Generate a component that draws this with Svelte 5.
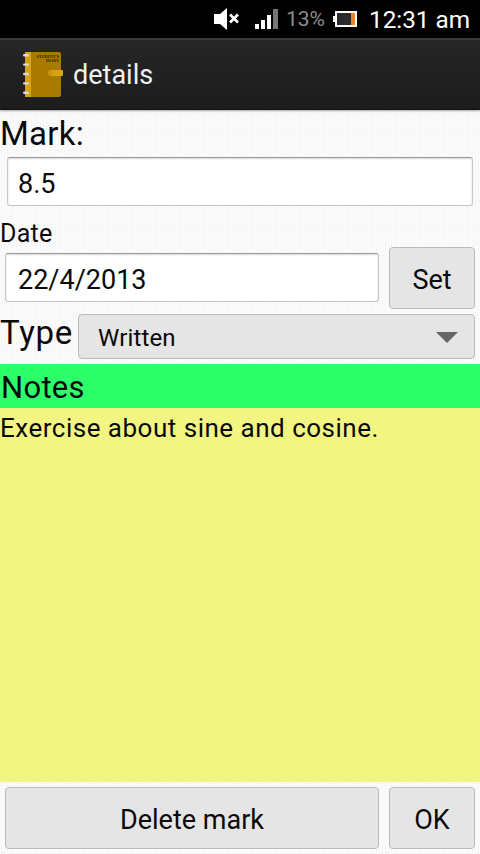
<script>
  const rings = [0, 1, 2, 3, 4];
</script>

<div class="screen">
  <header class="status">
    <svg class="mute" width="30" height="22" viewBox="0 0 30 22">
      <path d="M0 6h6l7-6v22l-7-6H0z" fill="#fff" />
      <path d="M16 6.5l8 8M24 6.5l-8 8" stroke="#fff" stroke-width="2.6" fill="none" />
    </svg>
    <svg class="signal" width="24" height="20" viewBox="0 0 24 20">
      <rect x="0" y="15" width="4" height="5" fill="#fff" />
      <rect x="6" y="11" width="4" height="9" fill="#fff" />
      <rect x="12" y="6" width="4" height="14" fill="#fff" />
      <rect x="18" y="0" width="5" height="20" fill="#777" />
    </svg>
    <span class="pct">13%</span>
    <svg class="battery" width="24" height="16" viewBox="0 0 24 16">
      <rect x="0" y="5" width="2" height="6" fill="#fff" />
      <rect x="2" y="0" width="22" height="16" fill="#fff" />
      <rect x="4" y="2" width="18" height="12" fill="#2a2a2a" />
      <rect x="18" y="2" width="4" height="12" fill="#f58220" />
    </svg>
    <span class="clock">12:31 am</span>
  </header>

  <div class="actionbar">
    <svg class="logo" width="42" height="48" viewBox="0 0 42 48">
      <rect x="3" y="1" width="36" height="45" rx="2" fill="#a87a00" />
      <rect x="3" y="1" width="6" height="45" fill="#d8a215" />
      <rect x="28" y="19" width="13" height="6" rx="1" fill="#d8a215" />
      <circle cx="28" cy="22" r="2.5" fill="#c8960f" />
      {#each rings as r}
        <rect x="1" y={3 + r * 9.4} width="6" height="2.4" rx="1.2" fill="#d8d8d8" />
      {/each}
      <text class="logo-text" x="37" y="6.5" text-anchor="end">STUDENT'S</text>
      <text class="logo-text" x="37" y="11" text-anchor="end">DIARY</text>
    </svg>
    <span class="title">details</span>
  </div>

  <main class="content">
    <label class="big mark" for="mark">Mark:</label>
    <div class="field mark-field" id="mark">8.5</div>

    <div class="small">Date</div>
    <div class="date-row">
      <div class="field date-field">22/4/2013</div>
      <button class="btn set">Set</button>
    </div>

    <div class="type-row">
      <span class="big">Type</span>
      <div class="spinner">
        <span>Written</span>
        <i class="arrow"></i>
      </div>
    </div>

    <div class="notes-head">Notes</div>
    <div class="notes">Exercise about sine and cosine.</div>

    <div class="actions">
      <button class="btn delete">Delete mark</button>
      <button class="btn ok">OK</button>
    </div>
  </main>
</div>

<style>
  :global(body) {
    margin: 0;
    background: #fbfbfb;
  }
  .screen {
    width: 480px;
    height: 854px;
    display: flex;
    flex-direction: column;
    overflow: hidden;
    font-family: Roboto, "Liberation Sans", sans-serif;
    color: #0a0a0a;
    background-color: #fbfbfb;
    background-image: repeating-conic-gradient(#f6f6f6 0 25%, #fdfdfd 0 50%);
    background-size: 3px 3px;
  }
  .status {
    height: 38px;
    flex: none;
    background: #000;
    display: flex;
    align-items: center;
    color: #fff;
    padding-left: 214px;
    box-sizing: border-box;
  }
  .signal { margin-left: 11px; }
  .pct {
    margin-left: 7px;
    font-size: 21px;
    color: #8c8c8c;
    width: 40px;
  }
  .battery { margin-left: 7px; }
  .clock {
    margin-left: 12px;
    font-size: 24.3px;
    white-space: nowrap;
  }
  .actionbar {
    height: 72px;
    flex: none;
    box-sizing: border-box;
    border-top: 2px solid #3a3a3a;
    border-bottom: 1px solid #111;
    background: linear-gradient(#262626, #1c1c1c);
    display: flex;
    align-items: center;
    padding-left: 22px;
    box-shadow: 0 1px 2px rgba(0, 0, 0, 0.35);
    z-index: 1;
  }
  .logo-text {
    font-family: "Liberation Serif", serif;
    font-size: 4px;
    font-weight: 700;
    fill: #2c2000;
  }
  .title {
    margin-left: 9px;
    color: #f0f0f0;
    font-size: 27px;
  }
  .content {
    flex: 1;
    display: flex;
    flex-direction: column;
    min-height: 0;
  }
  .big {
    font-size: 33px;
    line-height: 38px;
    letter-spacing: 0.3px;
  }
  .mark {
    display: block;
    margin: 5px 0 0 0;
    height: 42px;
  }
  .field {
    box-sizing: border-box;
    background: #fff;
    border: 1.5px solid #c6c6c6;
    border-top-color: #9a9a9a;
    border-radius: 3px;
    box-shadow: inset 0 1px 2px rgba(0, 0, 0, 0.15);
    font-size: 27px;
    height: 49px;
    line-height: 46px;
    padding: 3px 0 0 10px;
  }
  .mark-field {
    margin-left: 7px;
    width: 466px;
  }
  .small {
    font-size: 25px;
    line-height: 27px;
    margin: 14px 0 0 0;
    letter-spacing: 0.3px;
  }
  .date-row {
    display: flex;
    height: 62px;
  }
  .date-field {
    margin: 6px 0 0 5px;
    width: 374px;
    padding-left: 12px;
  }
  .btn {
    box-sizing: border-box;
    background: #e5e5e5;
    border: 1.5px solid #bbb;
    border-radius: 4px;
    font-family: inherit;
    font-size: 27px;
    color: #0a0a0a;
    padding: 3px 0 0;
    height: 62px;
  }
  .set {
    width: 86px;
    margin-left: 10px;
  }
  .type-row {
    display: flex;
    margin-top: 5px;
    height: 45px;
  }
  .type-row .big {
    width: 78px;
    letter-spacing: 0.7px;
  }
  .spinner {
    box-sizing: border-box;
    width: 397px;
    height: 45px;
    background: #e5e5e5;
    border: 1.5px solid #bbb;
    border-radius: 4px;
    display: flex;
    align-items: center;
    justify-content: space-between;
    padding: 2px 16px 0 19px;
    font-size: 24px;
    letter-spacing: 0.15px;
  }
  .arrow {
    width: 0;
    height: 0;
    border-left: 11px solid transparent;
    border-right: 11px solid transparent;
    border-top: 11px solid #666;
  }
  .notes-head {
    margin-top: 5px;
    height: 44px;
    line-height: 48px;
    background: #2dff6b;
    font-size: 31px;
    letter-spacing: 0.3px;
    padding-left: 1px;
  }
  .notes {
    height: 374px;
    background: #f3f583;
    font-size: 26px;
    letter-spacing: 0.5px;
    line-height: 40px;
    box-sizing: border-box;
  }
  .actions {
    display: flex;
    margin-top: 5px;
    padding-left: 5px;
  }
  .delete { width: 374px; }
  .ok {
    width: 86px;
    margin-left: 10px;
  }
</style>
